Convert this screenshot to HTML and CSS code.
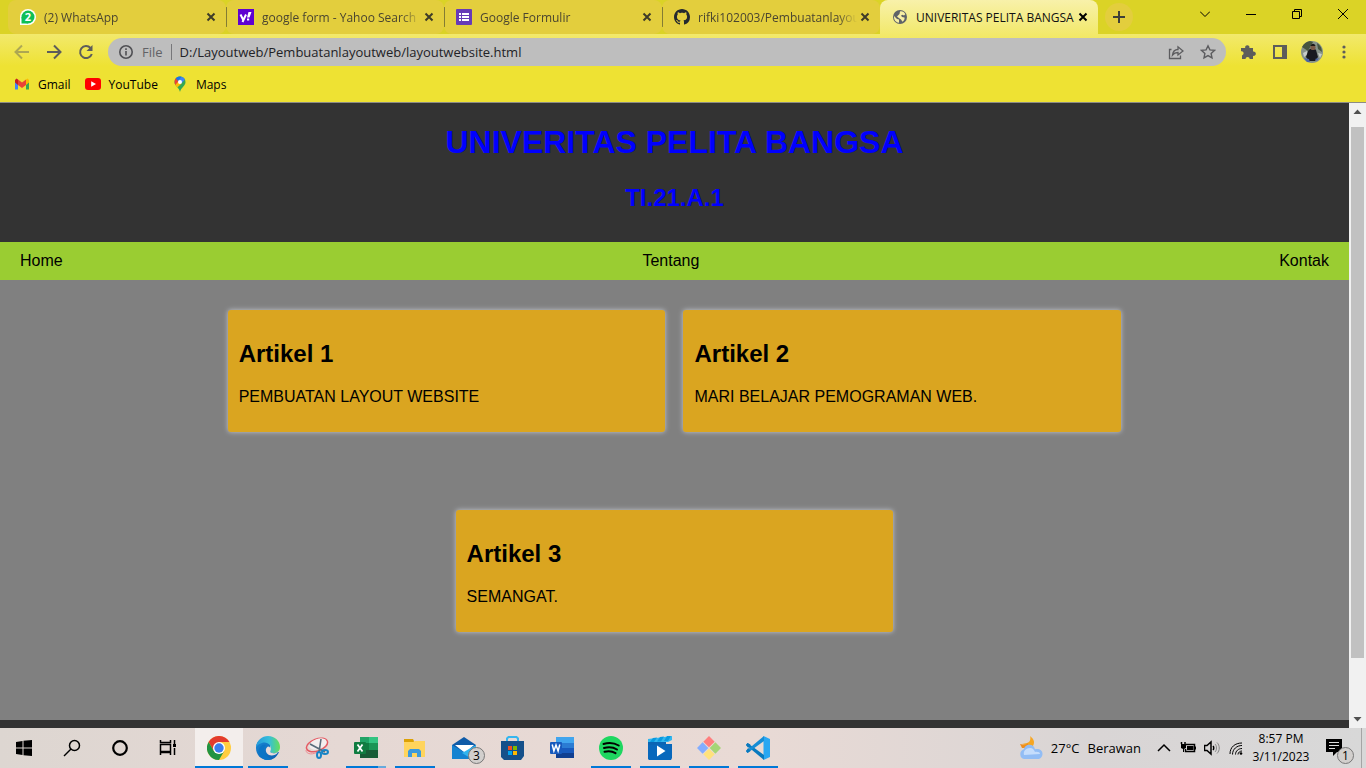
FILE: index.html
```html
<!DOCTYPE html>
<html lang="id">
<head>
<meta charset="utf-8">
<title>UNIVERITAS PELITA BANGSA</title>
<link rel="stylesheet" href="styles.css">
</head>
<body>
<div class="tabstrip">
  <div class="tabs">
    <div class="tab">
      <svg class="fav" viewBox="0 0 16 16"><circle cx="8" cy="8" r="8" fill="#fff"/><path d="M0 16V9h7v7z" fill="#fff"/><circle cx="8" cy="8" r="6.500" fill="#0fbf55"/><path d="M1.500 14.500V8h6.500v6.500z" fill="#0fbf55"/><text x="8" y="12" text-anchor="middle" class="badge-num">2</text></svg>
      <span class="tab-title">(2) WhatsApp</span>
      <button class="tab-close" aria-label="Close tab"><svg viewBox="0 0 10 10"><path d="M1.500 1.500l7 7M8.500 1.500l-7 7"/></svg></button>
    </div>
    <div class="tab divided">
      <svg class="fav" viewBox="0 0 16 16"><path d="M0 0h16v16H0z" fill="#5f01d1"/><path d="M2.500 5.500l2.500 5M8 5.500L4.500 13" stroke="#fff" stroke-width="2" fill="none"/><path d="M10.500 3h3l-2 5.500H9zM9 9.500h2.200v2H9z" fill="#fff"/></svg>
      <span class="tab-title">google form - Yahoo Search</span>
      <button class="tab-close" aria-label="Close tab"><svg viewBox="0 0 10 10"><path d="M1.500 1.500l7 7M8.500 1.500l-7 7"/></svg></button>
    </div>
    <div class="tab divided">
      <svg class="fav" viewBox="0 0 16 16"><rect width="16" height="16" rx="1" fill="#673ab7"/><path d="M3 4h2v2H3zM6 4h7v2H6zM3 7h2v2H3zM6 7h7v2H6zM3 10h2v2H3zM6 10h7v2H6z" fill="#fff"/></svg>
      <span class="tab-title">Google Formulir</span>
      <button class="tab-close" aria-label="Close tab"><svg viewBox="0 0 10 10"><path d="M1.500 1.500l7 7M8.500 1.500l-7 7"/></svg></button>
    </div>
    <div class="tab divided">
      <svg class="fav" viewBox="0 0 16 16"><path fill="#24292f" d="M8 0C3.580 0 0 3.580 0 8c0 3.540 2.290 6.530 5.470 7.590.4.070.55-.17.55-.38 0-.19-.01-.82-.01-1.490-2.010.37-2.530-.49-2.690-.94-.09-.23-.48-.94-.82-1.130-.28-.15-.68-.52-.01-.53.63-.01 1.080.58 1.230.82.72 1.210 1.870.87 2.330.66.07-.52.28-.87.51-1.070-1.780-.2-3.640-.89-3.640-3.950 0-.87.31-1.590.82-2.150-.08-.2-.36-1.020.08-2.120 0 0 .67-.21 2.200.82.64-.18 1.320-.27 2-.27s1.360.09 2 .27c1.530-1.040 2.200-.82 2.200-.82.44 1.100.16 1.920.08 2.120.51.56.82 1.270.82 2.150 0 3.070-1.870 3.750-3.650 3.950.29.25.54.73.54 1.480 0 1.070-.01 1.930-.01 2.200 0 .21.15.46.55.38A8 8 0 0 0 16 8c0-4.420-3.580-8-8-8z"/></svg>
      <span class="tab-title">rifki102003/Pembuatanlayout</span>
      <button class="tab-close" aria-label="Close tab"><svg viewBox="0 0 10 10"><path d="M1.500 1.500l7 7M8.500 1.500l-7 7"/></svg></button>
    </div>
    <div class="tab active">
      <svg class="fav" viewBox="0 0 16 16"><circle cx="8" cy="8" r="7" fill="#5f6368"/><path d="M2 7l3 3 2 .5v3.300C4 13.500 2 11 2 8zM8 2.500c2-.8 4.500.8 5.300 2.700L12 6.500l-1.500-.8L9 6.500l1 1.500 2.500.5c.5 1.500-.8 3.500-2 4.200L9 10.500 6.500 8.700 5 7.500 7.500 5z" fill="#f8efa3"/></svg>
      <span class="tab-title">UNIVERITAS PELITA BANGSA</span>
      <button class="tab-close" aria-label="Close tab"><svg viewBox="0 0 10 10"><path d="M1.500 1.500l7 7M8.500 1.500l-7 7"/></svg></button>
    </div>
    <button class="new-tab" aria-label="New tab"><svg viewBox="0 0 12 12" width="12" height="12"><path d="M6 0v12M0 6h12" stroke="#3f3f38" stroke-width="2"/></svg></button>
  </div>
  <div class="window-controls">
    <button aria-label="Search tabs"><svg viewBox="0 0 10 10"><path d="M0 2.500l5 5 5-5"/></svg></button>
    <button aria-label="Minimize"><svg viewBox="0 0 10 10"><path d="M0 5.500h10"/></svg></button>
    <button aria-label="Restore"><svg viewBox="0 0 10 10"><path d="M.5 2.500h7v7h-7zM2.500 2.500v-2h7v7h-2"/></svg></button>
    <button aria-label="Close"><svg viewBox="0 0 10 10"><path d="M0 0l10 10M10 0L0 10"/></svg></button>
  </div>
</div>

<div class="chrome-bars">
  <div class="toolbar">
    <button class="tool faded" aria-label="Back"><svg viewBox="0 0 16 16"><path d="M15 8H2M8 1.500L1.500 8 8 14.500"/></svg></button>
    <button class="tool" aria-label="Forward"><svg viewBox="0 0 16 16"><path d="M1 8h13M8 1.500L14.500 8 8 14.500"/></svg></button>
    <button class="tool" aria-label="Reload"><svg viewBox="0 0 16 16"><path d="M13.800 10A6 6 0 1 1 12.500 4"/><path d="M14.500 1v6h-6z" class="solid"/></svg></button>
    <div class="omnibox">
      <svg class="info" viewBox="0 0 14 14"><circle cx="7" cy="7" r="6.200"/><path d="M7 6v4.500M7 3.300v1.600"/></svg>
      <label class="scheme" for="address">File</label>
      <input id="address" type="text" value="D:/Layoutweb/Pembuatanlayoutweb/layoutwebsite.html">
      <button class="omni-btn" aria-label="Share"><svg viewBox="0 0 16 16" stroke-width="1.300"><path d="M3.500 5.500H1.500v9h11v-3M4.500 11c.5-4 2.500-5.500 5.500-5.500V2.800L15 7l-5 4V8.500c-2.500 0-4 .5-5.500 2.500z"/></svg></button>
      <button class="omni-btn" aria-label="Bookmark"><svg viewBox="0 0 16 16" stroke-width="1.400"><path d="M8 1.800l1.900 4.100 4.500.5-3.300 3 .9 4.500L8 11.600l-4 2.300.9-4.500-3.300-3 4.500-.5z"/></svg></button>
    </div>
    <div class="tool-group">
      <button class="tool" aria-label="Extensions"><svg viewBox="0 0 16 16"><path class="solid" d="M2 4h3.200a2.200 2.200 0 1 1 4.200 0H13v3.600a2.200 2.200 0 1 1 0 4.200V15H9.700a2.100 2.100 0 0 0-4.200 0H2v-3.600a2.100 2.100 0 0 0 0-4.100H1V4z"/></svg></button>
      <button class="tool" aria-label="Side panel"><svg viewBox="0 0 16 16"><path d="M2 2h12v12H2z"/><path class="solid" d="M10 1h5v14h-5z"/></svg></button>
      <button class="tool" aria-label="Profile"><svg class="avatar" viewBox="0 0 22 22"><circle cx="11" cy="11" r="11" fill="#87938a"/><path d="M1 6a11 11 0 0 1 8-6l3 1-5 9zM16 2a11 11 0 0 1 5 9l-4-3z" fill="#46553f"/><path d="M2 12l4-2 1 3-4 3zM17 12l4 1-2 4z" fill="#c6ccc8"/><path d="M7 10c2-3 6-3 8-1l2 7-3 4H8l-3-4z" fill="#17191f"/><circle cx="12" cy="6.500" r="2.600" fill="#7b5a47"/><path d="M9.500 5c1-3 4-3 5 0z" fill="#1b1a1b"/><path d="M3 17l5 1 1 3-3 0zM14 18l4-1-2 3z" fill="#4c66a4"/></svg></button>
      <button class="tool" aria-label="Menu"><svg viewBox="0 0 16 16"><g class="solid"><circle cx="8" cy="3" r="1.600"/><circle cx="8" cy="8" r="1.600"/><circle cx="8" cy="13" r="1.600"/></g></svg></button>
    </div>
  </div>
  <nav class="bookmarks" aria-label="Bookmarks">
    <a href="#gmail"><svg viewBox="0 0 16 16"><path d="M1 4v9.500h3V7z" fill="#4285f4"/><path d="M15 4v9.500h-3V7z" fill="#34a853"/><path d="M12 3.500L13.500 2.500 15 4v2.500L12 9z" fill="#fbbc04"/><path d="M1 4l1.500-1.500L4 3.500V9L1 6.500z" fill="#c5221f"/><path d="M4 3.500l4 3 4-3V9l-4 3-4-3z" fill="#ea4335"/></svg>Gmail</a>
    <a href="#youtube"><svg viewBox="0 0 16 16"><rect y="2" width="16" height="12" rx="3" fill="#f00"/><path d="M6.200 5.200v5.600L11 8z" fill="#fff"/></svg>YouTube</a>
    <a href="#maps"><svg viewBox="0 0 16 16"><path d="M2.500 6a5.500 5.500 0 0 1 11 0c0 4-4.500 5.500-5.500 10-.8-4.500-5.500-6-5.500-10z" fill="#34a853"/><path d="M3.300 8.900C2 6.500 2.500 3.800 3.800 2.300L8 6z" fill="#ea4335"/><path d="M3.800 2.300C5.300.5 7.500.2 9.700.8L6 5z" fill="#1a73e8"/><path d="M9.700.8c1.400.4 2.600 1.300 3.200 2.600L9.700 7.200 6 4.800z" fill="#4285f4"/><path d="M3.300 8.900l3.500-4.200 2.800 2.800-4.300 4z" fill="#fbbc04"/><circle cx="8" cy="6" r="2" fill="#fff"/></svg>Maps</a>
  </nav>
</div>

<div class="viewport">
  <div class="page">
    <header class="site-header">
      <h1>UNIVERITAS PELITA BANGSA</h1>
      <h2>TI.21.A.1</h2>
    </header>
    <nav class="site-nav">
      <a href="#home">Home</a>
      <a href="#tentang">Tentang</a>
      <a href="#kontak">Kontak</a>
    </nav>
    <main class="content">
      <div class="articles">
        <article class="card"><h2>Artikel 1</h2><p>PEMBUATAN LAYOUT WEBSITE</p></article>
        <article class="card"><h2>Artikel 2</h2><p>MARI BELAJAR PEMOGRAMAN WEB.</p></article>
        <article class="card"><h2>Artikel 3</h2><p>SEMANGAT.</p></article>
      </div>
    </main>
    <footer class="site-footer"></footer>
  </div>
  <div class="scrollbar">
    <svg viewBox="0 0 17 17"><path d="M4.500 11l4-4.500 4 4.500z"/></svg>
    <div class="track"><div class="thumb"></div></div>
    <svg viewBox="0 0 17 17"><path d="M4.500 6l4 4.500 4-4.500z"/></svg>
  </div>
</div>

<div class="taskbar">
  <div class="system">
    <button aria-label="Start"><svg viewBox="0 0 24 24"><path d="M4 6l6.500-1v6.500H4zM11.500 4.800L20 4v7.500h-8.500zM4 12.500h6.500V19L4 18zM11.500 12.500H20V20l-8.500-.8z"/></svg></button>
    <button aria-label="Search"><svg viewBox="0 0 24 24"><g class="line"><circle cx="14.500" cy="9.500" r="5"/><path d="M11 13l-7 7"/></g></svg></button>
    <button aria-label="Cortana"><svg viewBox="0 0 24 24"><circle cx="12" cy="12" r="6.800" fill="none" stroke="#000" stroke-width="2.200"/></svg></button>
    <button aria-label="Task view"><svg viewBox="0 0 24 24"><path class="line" d="M4.500 4v2.500h10V4M4.500 8.500h10v7h-10zM4.500 19v-2.500h10V19M18.500 4v4M18.500 12v7"/><path d="M17 8h3v3h-3z"/></svg></button>
  </div>
  <div class="apps">
    <button class="open current" aria-label="Chrome"><svg viewBox="0 0 24 24"><circle cx="12" cy="12" r="12" fill="#ffcd40"/><path d="M1.600 6A12 12 0 0 1 22.400 6H12L6.800 15z" fill="#e33b2e"/><path d="M1.600 6A12 12 0 0 0 12 24l5.200-9-5.200 3-5.200-3z" fill="#229342"/><circle cx="12" cy="12" r="6" fill="#fff"/><circle cx="12" cy="12" r="4.700" fill="#3b7ded"/></svg></button>
    <button class="open" aria-label="Edge"><svg viewBox="0 0 24 24"><defs><linearGradient id="edge-top"><stop stop-color="#2399db"/><stop offset=".55" stop-color="#36bedb"/><stop offset="1" stop-color="#66df58"/></linearGradient><linearGradient id="edge-low" x2="1" y2="1"><stop stop-color="#1888d4"/><stop offset="1" stop-color="#0c5eb0"/></linearGradient></defs><path d="M0 12C0 5 5 2 9 4c5 1 6 5 5 9-1 3 2 5 9 3-2 5-6 8-11 8C5 24 0 19 0 12z" fill="url(#edge-low)"/><path d="M9 10c-3 5 1 11 7 13.300C8 26 1 20 3 13c1-3 4-5 7-4z" fill="#0b75c6"/><path d="M0 11C1 4 6 0 12 0c7 0 12 5 12 11 0 4-3 6-6 6-2.500 0-4.500-1-3.700-2.300C17 10 11 5 6 7 3 8 1 9.500 0 11z" fill="url(#edge-top)"/><path d="M14.300 14.700c-1 2 2.700 3 5.500 2.300l2.200-.8c-2 3-6 4-9 2.800-4-2-4-7-1-8.500 2 0 3 2 2.300 4.200z" fill="#e9dcda"/></svg></button>
    <button aria-label="Snipping Tool"><svg viewBox="0 0 24 24"><g fill="none"><ellipse cx="12" cy="9" rx="11" ry="6" transform="rotate(-20 12 9)" stroke="#e55b64" stroke-width="1.500"/><ellipse cx="13" cy="8" rx="9" ry="5" transform="rotate(-20 13 8)" fill="#f3eeee"/><path d="M1 14c0 5 8 5 13 1" stroke="#ee8c92"/><path d="M16 3l-2 13M5 8l15 8" stroke="#596c7b" stroke-width="1.600"/><g stroke="#1684c6" stroke-width="2"><ellipse cx="14" cy="19" rx="2" ry="3"/><ellipse cx="20" cy="16" rx="3" ry="2"/></g></g></svg></button>
    <button class="open grouped" aria-label="Excel"><svg viewBox="0 0 24 24"><path d="M6 1h9v7H6z" fill="#21a366"/><path d="M15 1h9v7h-9z" fill="#33c481"/><path d="M6 7h9v15H6z" fill="#107c41"/><path d="M15 7h9v7h-9z" fill="#1b9555"/><path d="M6 14h18v8H6z" fill="#185c37"/><rect y="6" width="12" height="12" rx="1" fill="#107c41"/><path d="M3.500 8.500l5 7M8.500 8.500l-5 7" stroke="#fff" stroke-width="1.800"/></svg></button>
    <button class="open" aria-label="File Explorer"><svg viewBox="0 0 24 24"><path d="M1 3h9l1 2v4H1z" fill="#dca105"/><path d="M1 6h9l2-1h10v16H1z" fill="#ffd45c"/><path d="M5 21v-6l2-2h9l2 2v6h-4v-4H9v4z" fill="#3b9add"/></svg></button>
    <button class="badged" aria-label="Mail"><svg viewBox="0 0 24 24"><path d="M0 9l12-8 12 8v14H0z" fill="#0f5ba8"/><path d="M3 9h19L13 17z" fill="#fff"/><path d="M0 9l24 14H0z" fill="#1483d1"/><path d="M24 9L10 17 20 23h4z" fill="#31b4ee"/></svg><span class="badge">3</span></button>
    <button aria-label="Store"><svg viewBox="0 0 24 24"><path d="M6 6V2.500L7.500 1h8L17 2.500V6" fill="none" stroke="#35b6ef" stroke-width="2"/><path d="M0 5h23v15l-3 4H3l-3-3z" fill="#15508a"/><path d="M7 10h4v4H7z" fill="#f25022"/><path d="M12 10h4v4h-4z" fill="#7fba00"/><path d="M7 15h4v4H7z" fill="#00a4ef"/><path d="M12 15h4v4h-4z" fill="#ffb900"/></svg></button>
    <button aria-label="Word"><svg viewBox="0 0 24 24"><path d="M6 1h18v6H6z" fill="#41a5ee"/><path d="M6 7h18v5H6z" fill="#2b7cd3"/><path d="M6 12h18v5H6z" fill="#185abd"/><path d="M6 17h18v5H6z" fill="#103f91"/><rect y="6" width="12" height="12" rx="1" fill="#185abd"/><path d="M2.200 8.500l1.700 6.500L6 9l2.100 6 1.700-6.500" fill="none" stroke="#fff" stroke-width="1.500"/></svg></button>
    <button class="open" aria-label="Spotify"><svg viewBox="0 0 24 24"><circle cx="12" cy="12" r="12" fill="#1ed760"/><path d="M4.500 8c5-1.500 11-1 15.200 1.500M5 12c4.500-1.300 9.500-.7 13 1.500M5.500 15.700c4-1 8-.5 11 1.400" fill="none" stroke="#000" stroke-width="2" stroke-linecap="round"/></svg></button>
    <button class="open" aria-label="Movies"><svg viewBox="0 0 24 24"><path d="M0 8h24v14l-1 2H1l-1-1z" fill="#0868bc"/><path d="M0 3l24-3v4l-4 2H0z" fill="#31b6ee"/><path d="M5 2L2 6h4l3-4.500zM12 1L9 5.500h4L16 .5zM19 0l-3 5h4l3-5z" fill="#0a9ae0"/><path d="M0 6h18v3H0z" fill="#0a65b4"/><path d="M9 9.500v11L17.500 15z" fill="#fff"/></svg></button>
    <button class="open" aria-label="Git Bash"><svg viewBox="0 0 24 24"><g transform="rotate(45 12 12)"><rect x="3.500" y="3.500" width="8" height="8" fill="#ff7e7e"/><rect x="12.500" y="3.500" width="8" height="8" fill="#a5d576"/><rect x="12.500" y="12.500" width="8" height="8" fill="#ffe27c"/><rect x="3.500" y="12.500" width="8" height="8" fill="#83adff"/></g></svg></button>
    <button class="open" aria-label="VS Code"><svg viewBox="0 0 24 24"><path d="M17.500 0L24 3v18l-6.500 3z" fill="#29a7f2"/><path d="M1.500 7L18 19v5L0 9z" fill="#0879be"/><path d="M1.500 17L18 5V0L0 15z" fill="#168dd5"/><path d="M0 9l1.500-2 3 1.500L0 15l1.500 2 3-2z" fill="#0879be"/></svg></button>
  </div>
  <div class="tray">
    <button class="weather"><svg viewBox="0 0 24 24"><path d="M11 0c4 3 5 6 3 10H8l-5-2 5-1c3-1 4-4 3-7z" fill="#f6a623"/><path d="M1 8l5 1 3-2v5H3z" fill="#ef8e20"/><path d="M5 23a5 5 0 0 1-.5-9.500c1-3 3.500-5 6-4.800 3 0 5 2 5.500 4.500 4-1 7.500 1 7.500 4.500 0 3-2 5.300-5 5.300z" fill="#92bdf5"/><path d="M5 19c-1-4 2-7 6-7 3 0 4 2 5 4 3-.5 5 .5 5 2z" fill="#c5ddfc"/></svg><span>27°C</span><span>Berawan</span></button>
    <button aria-label="Show hidden icons"><svg class="small" viewBox="0 0 16 16"><path class="line" d="M2 11l6-6 6 6"/></svg></button>
    <button aria-label="Battery"><svg class="small" viewBox="0 0 16 16"><path d="M6 4.500h8.500v7h-9V9" class="line"/><path d="M15 6.500h1v3h-1zM7 6h6.500v4H7zM1 4h5v4l-2 1v3H3V9L1 8z"/><path d="M1.500 2v2M5 2v2" class="line"/></svg></button>
    <button aria-label="Volume"><svg class="small" viewBox="0 0 16 16"><path class="line" d="M.5 5.500h2.500L7 2v12l-4-3.500H.5zM9 6c1 1 1 3 0 4"/><path d="M11 4c2 2 2 6 0 8M13 2.500c3 3 3 8 0 11" fill="none" stroke="#888"/></svg></button>
    <button aria-label="Network"><svg class="small" viewBox="0 0 16 16"><path class="thin" d="M2 14C2 7 7 3 14 3M4.500 14.500C4.500 9 9 5.500 14 5.500M7.500 14.500c0-3.500 3-6 6.500-6M10 14.500c0-2 2-3.500 4-3.500"/><circle cx="13" cy="13.500" r="1.300"/></svg></button>
    <button class="clock"><span>8:57 PM</span><span>3/11/2023</span></button>
    <button class="badged notes" aria-label="Notifications"><svg viewBox="0 0 24 24"><path d="M1 3h16v13h-5l-4 4v-4H1z"/><path d="M4 6.500h10M4 9.500h10M4 12.500h6" stroke="#ddd"/></svg><span class="badge">1</span></button>
    <div class="show-desktop"></div>
  </div>
</div>
</body>
</html>
```
FILE: styles.css
```css
* { box-sizing: border-box; }

body {
  margin: 0;
  height: 100vh;
  display: flex;
  flex-direction: column;
  overflow: hidden;
  font-family: "Open Sans", "Noto Sans", sans-serif;
  font-size: 12px;
  color: #000;
}

button {
  border: 0;
  padding: 0;
  background: none;
  font: inherit;
  color: inherit;
  display: flex;
  align-items: center;
  justify-content: center;
}

svg { display: block; flex: none; }
a { color: inherit; text-decoration: none; }

/* Tab strip */
.tabstrip {
  flex: none;
  height: 34px;
  display: flex;
  justify-content: space-between;
  background: #dbd326;
}
.tabs { display: flex; padding-left: 8px; align-items: center; }
.tab {
  width: 218px;
  height: 34px;
  display: flex;
  align-items: center;
  gap: 8px;
  padding: 0 10px 0 12px;
  border-radius: 8px;
  background: #e3ce3d;
  color: #4a4530;
}
.tab.divided { background: linear-gradient(#847c33, #847c33) 0 50% / 1px 20px no-repeat #e3ce3d; }
.tab.active {
  background: linear-gradient(#f8f1aa, #f2e96c);
  border-radius: 8px 8px 0 0;
  color: #111;
}
.fav { width: 16px; height: 16px; }
.badge-num { font: bold 11px "Open Sans", sans-serif; fill: #fff; }
.tab-title {
  flex: 1;
  min-width: 0;
  margin-right: -5px;
  overflow: hidden;
  white-space: nowrap;
  -webkit-mask-image: linear-gradient(90deg, #000 calc(100% - 20px), transparent);
  mask-image: linear-gradient(90deg, #000 calc(100% - 20px), transparent);
}
.tab.active .tab-title { -webkit-mask-image: none; mask-image: none; }
.tab-close svg { width: 10px; height: 10px; stroke: #3f3c28; stroke-width: 2; }
.tab.active .tab-close svg { stroke: #000; }
.new-tab {
  width: 28px;
  height: 28px;
  margin-left: 7px;
  border-radius: 50%;
  background: #e3ce3d;
}
.window-controls { display: flex; height: 28px; }
.window-controls button { width: 46px; }
.window-controls svg { width: 10px; height: 10px; fill: none; stroke: #000; }

/* Toolbar and bookmarks */
.chrome-bars {
  flex: none;
  background: linear-gradient(#f2e96c, #eee233 32px);
  border-bottom: 1px solid #8c8c86;
}
.toolbar { display: flex; align-items: center; height: 36px; padding: 0 6px; }
.tool { width: 32px; height: 28px; }
.tool svg { width: 16px; height: 16px; fill: none; stroke: #5d5d5b; stroke-width: 2; }
.tool .solid { fill: #5d5d5b; stroke: none; }
.tool svg.avatar { width: 22px; height: 22px; stroke: none; }
.faded { opacity: .45; }
.omnibox {
  flex: 1;
  height: 28px;
  margin: 0 6px;
  padding: 0 10px 0 11px;
  display: flex;
  align-items: center;
  border-radius: 14px;
  background: #bebebe;
  font-size: 13px;
}
.info { width: 14px; height: 14px; fill: none; stroke: #505054; stroke-width: 1.6; }
.scheme { margin-left: 9px; padding-right: 8px; line-height: 16px; border-right: 1px solid #77777a; color: #626266; }
.omnibox input {
  flex: 1;
  min-width: 0;
  padding: 0 0 0 8px;
  border: 0;
  background: none;
  font: inherit;
  color: #222226;
}
.omni-btn { width: 16px; margin-left: 16px; }
.omni-btn svg { width: 16px; height: 16px; fill: none; stroke: #5c5c5f; }
.tool-group { display: flex; }
.bookmarks { display: flex; align-items: center; gap: 14px; height: 32px; padding: 0 14px 4px; }
.bookmarks a { display: flex; align-items: center; gap: 8px; }
.bookmarks svg { width: 16px; height: 16px; }

/* Page */
.viewport { flex: 1; min-height: 0; display: flex; }
.page {
  flex: 1;
  min-width: 0;
  overflow: hidden;
  display: flex;
  flex-direction: column;
  background: #808080;
  font-family: Arial, "Liberation Sans", sans-serif;
  font-size: 16px;
}
.site-header {
  padding: 21px 0 30px;
  background: #333;
  color: #00f;
  text-align: center;
}
.site-header h1 { margin: 0 0 23px; font-size: 32px; line-height: 37px; }
.site-header h2 { margin: 0; font-size: 24px; line-height: 28px; }
.site-nav {
  display: flex;
  justify-content: space-between;
  padding: 10px 20px;
  background: #9acd32;
  line-height: 18px;
}
.content { flex: 1; padding-top: 30px; }
.articles {
  width: 66.25%;
  margin: 0 auto;
  display: flex;
  flex-wrap: wrap;
  justify-content: center;
  gap: 78px 18px;
}
.card {
  width: calc(50% - 9px);
  padding: 30px 11px 26px;
  border-radius: 3px;
  background: #daa520;
  box-shadow: 0 0 5px #c4c8d0;
}
.card h2 { margin: 0 0 20px; font-size: 24px; line-height: 28px; }
.card p { margin: 0; line-height: 18px; }
.site-footer { height: 8px; background: #333; }

.scrollbar { width: 17px; display: flex; flex-direction: column; background: #f1f1f1; }
.scrollbar svg { width: 17px; height: 17px; fill: #505050; }
.track { flex: 1; padding: 7px 2px 0; }
.thumb { height: 91%; background: #c1c1c1; }

/* Taskbar */
.taskbar {
  flex: none;
  height: 40px;
  display: flex;
  background: linear-gradient(90deg, #ddd6d1, #e5d8d4 25%, #e9dad5 55%, #d9d5d5 80%, #d8d8d8);
}
.taskbar svg { width: 24px; height: 24px; }
.taskbar .line { fill: none; stroke: #000; stroke-width: 1.5; }
.taskbar .thin { fill: none; stroke: #000; }
.system, .apps, .tray { display: flex; }
.system button, .apps button { width: 48px; }
.apps { gap: 1px; margin-left: 3px; }
.open { background: linear-gradient(#0078d7, #0078d7) 50% 100% / 40px 2px no-repeat; }
.open.current { background: linear-gradient(#0078d7, #0078d7) 50% 100% / 48px 2px no-repeat #f3eeec; }
.open.grouped { background: linear-gradient(90deg, #0078d7 80%, #66aadd 80%) 50% 100% / 40px 2px no-repeat; }
.badged { position: relative; }
.badge {
  position: absolute;
  right: 3px;
  bottom: 4px;
  width: 17px;
  height: 17px;
  border: 1px solid #777;
  border-radius: 50%;
  background: #d2cfcd;
  line-height: 15px;
  text-align: center;
}
.tray { margin-left: auto; }
.tray .small { width: 16px; height: 16px; }
.tray button { width: 24px; }
.tray .weather { width: auto; gap: 8px; margin-right: 11px; font-size: 13px; }
.tray .clock { width: 64px; margin-left: 1px; flex-direction: column; line-height: 18px; }
.tray .notes { width: 40px; margin-left: 4px; }
.show-desktop { width: 5px; margin-left: 4px; border-left: 1px solid #a5a5a5; }
```
